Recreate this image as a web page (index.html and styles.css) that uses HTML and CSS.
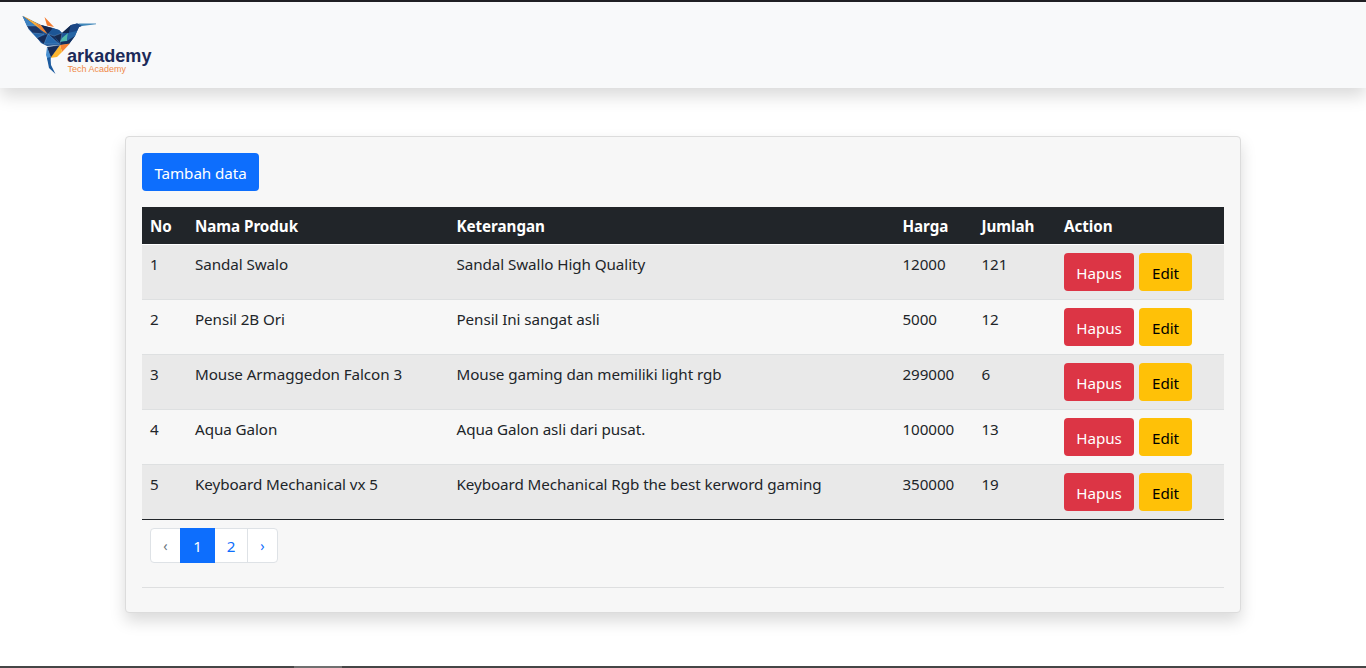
FILE: index.html
```
<!DOCTYPE html>
<html lang="id">
<head>
<meta charset="utf-8">
<title>Arkademy</title>
<link rel="stylesheet" href="styles.css">
</head>
<body>
<nav class="navbar">
<svg class="logo" width="140" height="64" viewBox="16 12 140 64" role="img" aria-label="arkademy Tech Academy">
<path fill="#1d5496" d="M22.5 16L28.5 29L37 38L41 43L47 46L60 45L69 44L75 36L79 27L83 25.5L77 23.5L71 25L62 33L59 30L41 25Z"/>
<path fill="#3c82c2" d="M22.5 16L36 26L27 26Z"/>
<path fill="#1b3668" d="M27 26L36 26L44 34L33 33Z"/>
<path fill="#2464a8" d="M28.5 29L33 33L44 34L37 38Z"/>
<path fill="#f9ae3c" d="M22.5 15.5L40 25L43 30L47 34L36 26Z"/>
<path fill="#f28532" d="M36 24L41 25L47.5 34L41 30Z"/>
<path fill="#f47c30" d="M44.5 17L54 27L47 25.5Z"/>
<path fill="#14264f" d="M41 25L53 28L48 34Z"/>
<path fill="#1d5595" d="M53 28L59 30L62 33L52 36L48 34Z"/>
<path fill="#152b58" d="M37 38L48 34L44 44ZM48 34L54 36L59 44Z"/>
<path fill="#2567ac" d="M48 34L59 44L44 44Z"/>
<path fill="#14294f" d="M62 33L71 25L69 33ZM54 36L62 33L60 43Z"/>
<path fill="#50b9aa" d="M68 33L67 41L60 42L62 38Z"/>
<path fill="#1b4785" d="M71 25L77 23.5L83 25.5L79 27L77 31L69 33Z"/>
<path fill="#2665a4" d="M68 33L77 31L75 36L67 41Z"/>
<path fill="#4188b9" d="M78 23.5L96 23.5L96 24.3L82 26Z"/>
<path fill="#15305d" d="M60 42L67 41L75 36L69 44L60 45Z"/>
<path fill="#f58232" d="M60 45L70 43.5L62 52Z"/>
<path fill="#fbb52f" d="M60 45L62 52L57 57L50 58Z"/>
<path fill="#162b57" d="M47 47L60 45L50.5 58Z"/>
<path fill="#4990d0" d="M47 47L51 57L49 64L46 55Z"/>
<path fill="#1c5b9f" d="M47 58L50.5 57L51 65L55.5 74L49 68Z"/>
<path class="facets" d="M27 26L36 26M33 33L44 34L37 38M48 34L44 44L59 44L48 34M48 34L54 36L62 33L60 45M47 47L60 45"/>
<text class="brand" x="67" y="61.8" textLength="84.5" lengthAdjust="spacingAndGlyphs">arkademy</text>
<text class="tagline" x="67.6" y="71.5" textLength="58.4" lengthAdjust="spacingAndGlyphs">Tech Academy</text>
</svg>
</nav>
<main class="card">
<button class="btn primary">Tambah data</button>
<table class="products">
<colgroup><col class="c-no"><col class="c-name"><col class="c-desc"><col class="c-price"><col class="c-qty"><col></colgroup>
<thead><tr><th>No</th><th>Nama Produk</th><th>Keterangan</th><th>Harga</th><th>Jumlah</th><th>Action</th></tr></thead>
<tbody>
<tr><td>1</td><td>Sandal Swalo</td><td>Sandal Swallo High Quality</td><td>12000</td><td>121</td><td><div class="actions"><button class="btn danger">Hapus</button><button class="btn warning">Edit</button></div></td></tr>
<tr><td>2</td><td>Pensil 2B Ori</td><td>Pensil Ini sangat asli</td><td>5000</td><td>12</td><td><div class="actions"><button class="btn danger">Hapus</button><button class="btn warning">Edit</button></div></td></tr>
<tr><td>3</td><td>Mouse Armaggedon Falcon 3</td><td>Mouse gaming dan memiliki light rgb</td><td>299000</td><td>6</td><td><div class="actions"><button class="btn danger">Hapus</button><button class="btn warning">Edit</button></div></td></tr>
<tr><td>4</td><td>Aqua Galon</td><td>Aqua Galon asli dari pusat.</td><td>100000</td><td>13</td><td><div class="actions"><button class="btn danger">Hapus</button><button class="btn warning">Edit</button></div></td></tr>
<tr><td>5</td><td>Keyboard Mechanical vx 5</td><td>Keyboard Mechanical Rgb the best kerword gaming</td><td>350000</td><td>19</td><td><div class="actions"><button class="btn danger">Hapus</button><button class="btn warning">Edit</button></div></td></tr>
</tbody>
</table>
<ul class="pagination">
<li class="arrow disabled">‹</li><li class="active">1</li><li>2</li><li class="arrow">›</li>
</ul>
<hr>
</main>
<footer class="taskbar"><span class="task"></span></footer>
</body>
</html>
```
FILE: styles.css
```
* { box-sizing: border-box; }
body {
  margin: 0;
  height: 668px;
  overflow: hidden;
  display: flex;
  flex-direction: column;
  background: #fff;
  color: #212529;
  font: 15.2px/24px "Noto Sans", "Open Sans", sans-serif;
  letter-spacing: -0.07px;
}
.navbar {
  height: 88px;
  flex: none;
  padding: 10px 16px;
  border-top: 2px solid #202024;
  background: #f8f9fa;
  box-shadow: 0 8px 16px rgba(0, 0, 0, .15);
}
.logo { display: block; }
.facets { fill: none; stroke: #7fa8cf; stroke-width: .35; }
.brand { font: bold 18.5px "Liberation Sans", Arial, sans-serif; fill: #1b2a58; letter-spacing: 0; }
.tagline { font: 9px "Liberation Sans", Arial, sans-serif; fill: #f08a48; letter-spacing: 0; }
.card {
  width: 1116px;
  height: 477px;
  flex: none;
  margin: 48px 0 0 125px;
  padding: 16px;
  border: 1px solid #dcdcdc;
  border-radius: 4px;
  background: #f7f7f7;
  box-shadow: 0 8px 16px rgba(0, 0, 0, .15);
}
.btn {
  display: block;
  height: 38px;
  padding: 1px 0 0;
  border: 0;
  border-radius: 4px;
  font: inherit;
  letter-spacing: inherit;
  text-align: center;
}
.primary { width: 117px; background: #0d6efd; color: #fff; }
.danger { width: 70px; background: #dc3545; color: #fff; }
.warning { width: 53px; background: #ffc107; color: #000; }
.actions { display: flex; gap: 5px; padding-top: 1px; }
.products {
  width: 1082px;
  margin-top: 16px;
  table-layout: fixed;
  border-collapse: separate;
  border-spacing: 0;
  border-bottom: 1px solid #212529;
}
.c-no { width: 45px; }
.c-name { width: 261.5px; }
.c-desc { width: 446px; }
.c-price { width: 79px; }
.c-qty { width: 82.5px; }
th {
  height: 38px;
  padding: 7px 8px 6px;
  border-bottom: 1px solid #fff;
  background: #212529;
  color: #fff;
  text-align: left;
  letter-spacing: -0.05px;
}
td {
  height: 55px;
  padding: 7px 8px 8px;
  border-bottom: 1px solid #dee0e1;
  vertical-align: top;
  white-space: nowrap;
}
tbody tr:nth-child(odd) { background: #e9e9e9; }
tbody tr:last-child td { height: 54px; border-bottom: 0; }
.pagination {
  display: flex;
  width: 128px;
  height: 35px;
  margin: 8px 0 0 8px;
  padding: 0;
  list-style: none;
  border: 1px solid #dee2e6;
  border-radius: 4px;
  background: #fff;
  color: #0d6efd;
}
.pagination li { width: 32px; padding-top: 5px; text-align: center; }
.pagination .arrow { width: 30px; font-size: 14px; }
.pagination .arrow:last-child { border-left: 1px solid #dee2e6; }
.pagination .disabled { width: 29px; color: #6c757d; }
.pagination .active { width: 35px; margin: -1px 0; padding-top: 6px; background: #0d6efd; color: #fff; }
hr { height: 1px; margin: 24px 0 0; border: 0; background: #dedfe0; }
.taskbar { height: 2px; margin-top: auto; flex: none; padding-left: 294px; background: #464646; }
.task { display: block; width: 48px; height: 2px; background: #707070; }
```
